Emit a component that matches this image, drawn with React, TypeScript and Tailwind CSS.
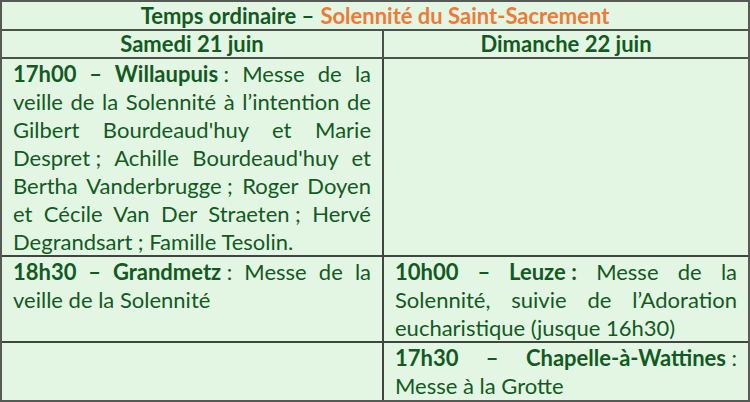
import React from "react";

const J = ({ children }: { children: React.ReactNode }) => (
  <div className="text-justify [text-align-last:justify] whitespace-nowrap">{children}</div>
);
const L = ({ children }: { children: React.ReactNode }) => (
  <div className="text-left whitespace-nowrap">{children}</div>
);

export default function App() {
  return (
    <div className="w-[750px] h-[402px] bg-[#e3f6e4] border-2 border-[#555a55] font-['Lato',sans-serif] text-[22px] leading-[28px] text-[#125a22] flex flex-col overflow-hidden">
      <div className="h-[29px] shrink-0 border-b-2 border-[#4a524a] flex items-center justify-center font-bold">
        <span>Temps ordinaire – </span>
        <span className="text-[#ee7a36] ml-[6px]">Solennité du Saint-Sacrement</span>
      </div>
      <div className="grid grid-cols-[382px_1fr] grid-rows-[28px_198px_86px_1fr] flex-1">
        <div className="border-r-2 border-b-2 border-[#4a524a] flex items-center justify-center font-bold">Samedi 21 juin</div>
        <div className="border-b-2 border-[#4a524a] flex items-center justify-center font-bold">Dimanche 22 juin</div>

        <div className="border-r-2 border-b-2 border-[#3f453f] px-[11px] pt-[1px]">
          <J><b>17h00 – Willaupuis</b>{"\u202F"}: Messe de la</J>
          <J>veille de la Solennité à l’intention de</J>
          <J>Gilbert Bourdeaud'huy et Marie</J>
          <J>Despret{"\u202F"}; Achille Bourdeaud'huy et</J>
          <J>Bertha Vanderbrugge{"\u202F"}; Roger Doyen</J>
          <J>et Cécile Van Der Straeten{"\u202F"}; Hervé</J>
          <L>Degrandsart{"\u202F"}; Famille Tesolin.</L>
        </div>
        <div className="border-b-2 border-[#3f453f]"></div>

        <div className="border-r-2 border-b-2 border-[#3f453f] px-[11px] pt-[1px]">
          <J><b>18h30 – Grandmetz</b>{"\u202F"}: Messe de la</J>
          <L>veille de la Solennité</L>
        </div>
        <div className="border-b-2 border-[#3f453f] px-[11px] pt-[1px]">
          <J><b>10h00 – Leuze{"\u202F"}:</b> Messe de la</J>
          <J>Solennité, suivie de l’Adoration</J>
          <L>eucharistique (jusque 16h30)</L>
        </div>

        <div className="border-r-2 border-[#3f453f]"></div>
        <div className="px-[11px] pt-[1px]">
          <J><b>17h30 – Chapelle-à-Wattines</b>{"\u202F"}:</J>
          <L>Messe à la Grotte</L>
        </div>
      </div>
    </div>
  );
}
